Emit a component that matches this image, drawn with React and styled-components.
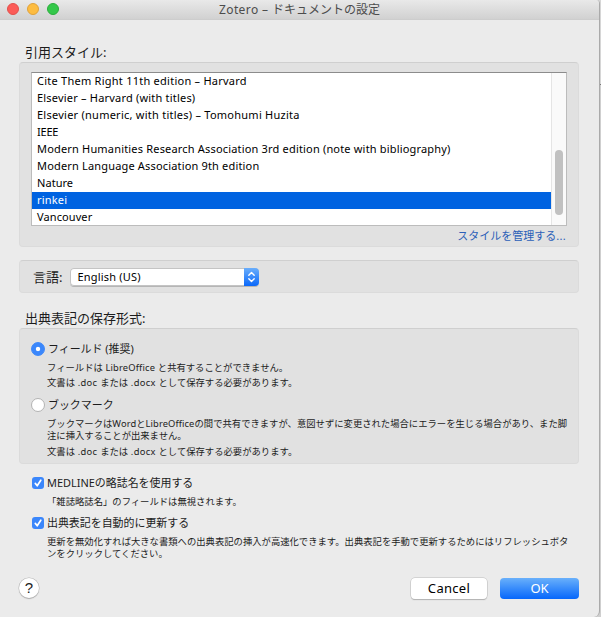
import { useState } from 'react';
import styled, { createGlobalStyle, css } from 'styled-components';

const GlobalStyle = createGlobalStyle`
  * {
    box-sizing: border-box;
  }

  body {
    margin: 0;
    background: #d2d2d2;
    font-family: "Noto Sans", "Noto Sans CJK JP", sans-serif;
    color: #1c1c1c;
    overflow: hidden;
  }
`;

const Desktop = styled.div`
  display: flex;
  width: 601px;
  height: 617px;
  background: linear-gradient(#d6d6d6 0 84px, #777 84px 85px, #cfcfcf 85px);
`;

const Window = styled.div`
  display: flex;
  flex-direction: column;
  width: 600px;
  height: 617px;
  background: #ebebeb;
  border-right: 1px solid #aaa;
  border-radius: 0 4px 6px 0;
  overflow: hidden;
`;

const TitleBar = styled.header`
  display: grid;
  grid-template-columns: 80px 1fr 80px;
  align-items: center;
  flex: none;
  height: 20px;
  background: linear-gradient(#e9e9e9, #d1d1d1);
  border-bottom: 1px solid #cdcdcd;
`;

const Lights = styled.div`
  display: flex;
  gap: 8px;
  padding: 0 0 1px 7px;
`;

const Light = styled.span`
  width: 12px;
  height: 12px;
  border-radius: 50%;
  background: ${({ $color }) => $color};
  border: 1px solid ${({ $edge }) => $edge};
`;

const Title = styled.h1`
  margin: 0;
  font-size: 12px;
  line-height: 18px;
  font-weight: 400;
  text-align: center;
  color: #4c4c4c;
  white-space: nowrap;
`;

const Latin = styled.span`
  letter-spacing: ${({ $spacing }) => $spacing || 0}px;
`;

const Content = styled.main`
  display: flex;
  flex-direction: column;
  flex: 1;
  padding: 22px 20px 0 19px;
`;

const SectionLabel = styled.h2`
  margin: 0 0 0 6px;
  height: 20px;
  font-size: 13px;
  line-height: 20px;
  font-weight: 400;
`;

const Group = styled.section`
  flex: none;
  height: ${({ $height }) => $height}px;
  background: #e1e1e1;
  border: 1px solid #dbdbdb;
  border-top-color: #cfcfcf;
  border-radius: 4px;
`;

const StyleGroup = styled(Group)`
  display: flex;
  flex-direction: column;
  padding: 9px 11px 0;
`;

const ListBox = styled.div`
  display: flex;
  height: 154px;
  background: #fff;
  border: 1px solid #bcbcbc;
  border-top-color: #8c8c8c;
  overflow: hidden;
`;

const StyleList = styled.ul`
  flex: 1;
  margin: 0;
  padding: 0;
  list-style: none;
`;

const StyleItem = styled.li`
  height: 17px;
  padding-left: 5px;
  font-size: 11px;
  line-height: 15px;
  white-space: nowrap;
  cursor: default;
  letter-spacing: ${({ $spacing }) => $spacing}px;
  color: ${({ $selected }) => ($selected ? '#fff' : '#000')};
  background: ${({ $selected }) => ($selected ? '#0063e1' : 'transparent')};
`;

const ScrollTrack = styled.div`
  width: 15px;
  padding: 77px 3px 0;
  background: #fafafa;
  border-left: 1px solid #e5e5e5;
`;

const ScrollThumb = styled.div`
  width: 8px;
  height: 65px;
  border-radius: 4px;
  background: #c1c1c1;
`;

const ManageLink = styled.a`
  align-self: flex-end;
  margin: 1px 1px 0 0;
  font-size: 11px;
  line-height: 18px;
  color: #2b5fb8;
`;

const LanguageGroup = styled(Group)`
  display: flex;
  align-items: center;
  gap: 8px;
  margin: 13px 0 15px;
  padding-left: 13px;
  font-size: 13px;
`;

const Select = styled.div`
  display: flex;
  width: 189px;
  height: 18px;
  font-size: 11px;
  line-height: 17px;
  background: #fff;
  color: #000;
  border-radius: 4px;
  box-shadow: inset 0 0 0 1px #c4c4c4, 0 1px 0 #b5b5b5;
  overflow: hidden;
`;

const SelectValue = styled.span`
  flex: 1;
  padding-left: 7px;
  letter-spacing: 0.2px;
`;

const SelectArrows = styled.span`
  width: 15px;
  height: 18px;
  background: linear-gradient(#6aaefb, #0a68fa);
`;

const OptionRow = styled.label`
  display: flex;
  align-items: center;
  gap: 3px;
  height: 18px;
  margin-top: ${({ $top }) => $top || 0}px;
  font-size: 10.95px;
  line-height: 18px;
`;

const FormatGroup = styled(Group)`
  padding: 11px 10px 0 11px;
`;

const Note = styled.p`
  margin: ${({ $top }) => $top || 0}px 0 0 16px;
  font-size: 9.33px;
  line-height: 12px;
  white-space: nowrap;
`;

const Radio = styled.span`
  width: 14px;
  height: 14px;
  border-radius: 50%;
  background: #fff;
  border: 1px solid #b3b3b3;
  ${({ $on }) =>
    $on &&
    css`
      background: radial-gradient(circle, #fff 0 1.8px, #3b87fb 2.6px);
      border-color: #3b87fb;
    `}
`;

const Checks = styled.div`
  padding: 10px 0 0 13px;

  ${Note} {
    margin-left: 15px;
  }
`;

const CheckBox = styled.span`
  display: flex;
  width: 12px;
  height: 12px;
  border-radius: 3px;
  background: #3a86fb;
`;

const Footer = styled.footer`
  display: flex;
  align-items: center;
  margin-top: 16px;
  height: 24px;
`;

const HelpButton = styled.button`
  width: 20px;
  height: 20px;
  margin-right: auto;
  padding: 0;
  border: 0;
  border-radius: 50%;
  background: #fff;
  box-shadow: 0 0 0 0.5px #b5b5b5, 0 1px 1px #aaa;
  font: 500 15px/20px "Liberation Sans", sans-serif;
  color: #222;
`;

const Button = styled.button`
  width: ${({ $primary }) => ($primary ? 79 : 76)}px;
  height: 21px;
  margin-left: ${({ $primary }) => ($primary ? 13 : 0)}px;
  padding: 0;
  border: 0;
  border-radius: 4px;
  font: 400 13px/19px "Noto Sans", sans-serif;
  letter-spacing: ${({ $primary }) => ($primary ? 0 : 0.3)}px;
  color: ${({ $primary }) => ($primary ? '#fff' : '#000')};
  background: ${({ $primary }) => ($primary ? 'linear-gradient(#69b0fb, #0667fb)' : '#fff')};
  box-shadow: ${({ $primary }) => ($primary ? 'none' : '0 0 0 0.5px #bbb, 0 1px 1px #aaa')};
`;

const styleNames = [
  { name: 'Cite Them Right 11th edition – Harvard', spacing: 0.25 },
  { name: 'Elsevier – Harvard (with titles)', spacing: 0.2 },
  { name: 'Elsevier (numeric, with titles) – Tomohumi Huzita', spacing: 0.25 },
  { name: 'IEEE', spacing: -0.2 },
  { name: 'Modern Humanities Research Association 3rd edition (note with bibliography)', spacing: 0.18 },
  { name: 'Modern Language Association 9th edition', spacing: 0.17 },
  { name: 'Nature', spacing: 0.05 },
  { name: 'rinkei', spacing: 0.2 },
  { name: 'Vancouver', spacing: 0.1 },
];

function Arrows() {
  return (
    <svg width="15" height="18" viewBox="0 0 15 18" fill="none" stroke="#fff" strokeWidth="1.4" strokeLinecap="round" strokeLinejoin="round">
      <path d="M4.8 7.3 7.5 4.6l2.7 2.7M4.8 10.7l2.7 2.7 2.7-2.7" />
    </svg>
  );
}

function Check() {
  return (
    <CheckBox>
      <svg width="12" height="12" viewBox="0 0 12 12" fill="none" stroke="#fff" strokeWidth="1.7" strokeLinecap="round" strokeLinejoin="round">
        <path d="M3.3 6.4 5.2 8.8 8.8 3.2" />
      </svg>
    </CheckBox>
  );
}

export default function App() {
  const [selected, setSelected] = useState('rinkei');
  const [format, setFormat] = useState('field');

  return (
    <Desktop>
      <GlobalStyle />
      <Window>
        <TitleBar>
          <Lights>
            <Light $color="#fc5b57" $edge="#e2504b" />
            <Light $color="#fdbc40" $edge="#e0a23a" />
            <Light $color="#34c84a" $edge="#2bae3c" />
          </Lights>
          <Title>
            <Latin $spacing={0.4}>Zotero – </Latin>ドキュメントの設定
          </Title>
        </TitleBar>
        <Content>
          <SectionLabel>引用スタイル:</SectionLabel>
          <StyleGroup $height={185}>
            <ListBox>
              <StyleList>
                {styleNames.map(({ name, spacing }) => (
                  <StyleItem
                    key={name}
                    $spacing={spacing}
                    $selected={name === selected}
                    onClick={() => setSelected(name)}
                  >
                    {name}
                  </StyleItem>
                ))}
              </StyleList>
              <ScrollTrack>
                <ScrollThumb />
              </ScrollTrack>
            </ListBox>
            <ManageLink>
              スタイルを管理する<Latin $spacing={0.3}>...</Latin>
            </ManageLink>
          </StyleGroup>

          <LanguageGroup $height={33}>
            <span>言語:</span>
            <Select>
              <SelectValue>English (US)</SelectValue>
              <SelectArrows>
                <Arrows />
              </SelectArrows>
            </Select>
          </LanguageGroup>

          <SectionLabel>出典表記の保存形式:</SectionLabel>
          <FormatGroup $height={136}>
            <OptionRow onClick={() => setFormat('field')}>
              <Radio $on={format === 'field'} />
              <span>フィールド (推奨)</span>
            </OptionRow>
            <Note $top={4}>
              フィールドは<Latin $spacing={0.18}> LibreOffice </Latin>と共有することができません。
            </Note>
            <Note $top={3}>
              文書は<Latin $spacing={0.32}> .doc </Latin>または<Latin $spacing={0.32}> .docx </Latin>として保存する必要があります。
            </Note>
            <OptionRow $top={7} onClick={() => setFormat('bookmark')}>
              <Radio $on={format === 'bookmark'} />
              <span>ブックマーク</span>
            </OptionRow>
            <Note $top={4}>
              ブックマークは<Latin $spacing={0.1}>Word</Latin>と<Latin $spacing={0.1}>LibreOffice</Latin>の間で共有できますが、意図せずに変更された場合にエラーを生じる場合があり、また脚
              <br />
              注に挿入することが出来ません。
            </Note>
            <Note $top={4}>
              文書は<Latin $spacing={0.32}> .doc </Latin>または<Latin $spacing={0.32}> .docx </Latin>として保存する必要があります。
            </Note>
          </FormatGroup>

          <Checks>
            <OptionRow>
              <Check />
              <span>
                <Latin>MEDLINE</Latin>の略誌名を使用する
              </span>
            </OptionRow>
            <Note $top={4}>「雑誌略誌名」のフィールドは無視されます。</Note>
            <OptionRow $top={6}>
              <Check />
              <span>出典表記を自動的に更新する</span>
            </OptionRow>
            <Note $top={4}>
              更新を無効化すれば大きな書類への出典表記の挿入が高速化できます。出典表記を手動で更新するためにはリフレッシュボタ
              <br />
              ンをクリックしてください。
            </Note>
          </Checks>

          <Footer>
            <HelpButton>?</HelpButton>
            <Button>Cancel</Button>
            <Button $primary>OK</Button>
          </Footer>
        </Content>
      </Window>
    </Desktop>
  );
}
